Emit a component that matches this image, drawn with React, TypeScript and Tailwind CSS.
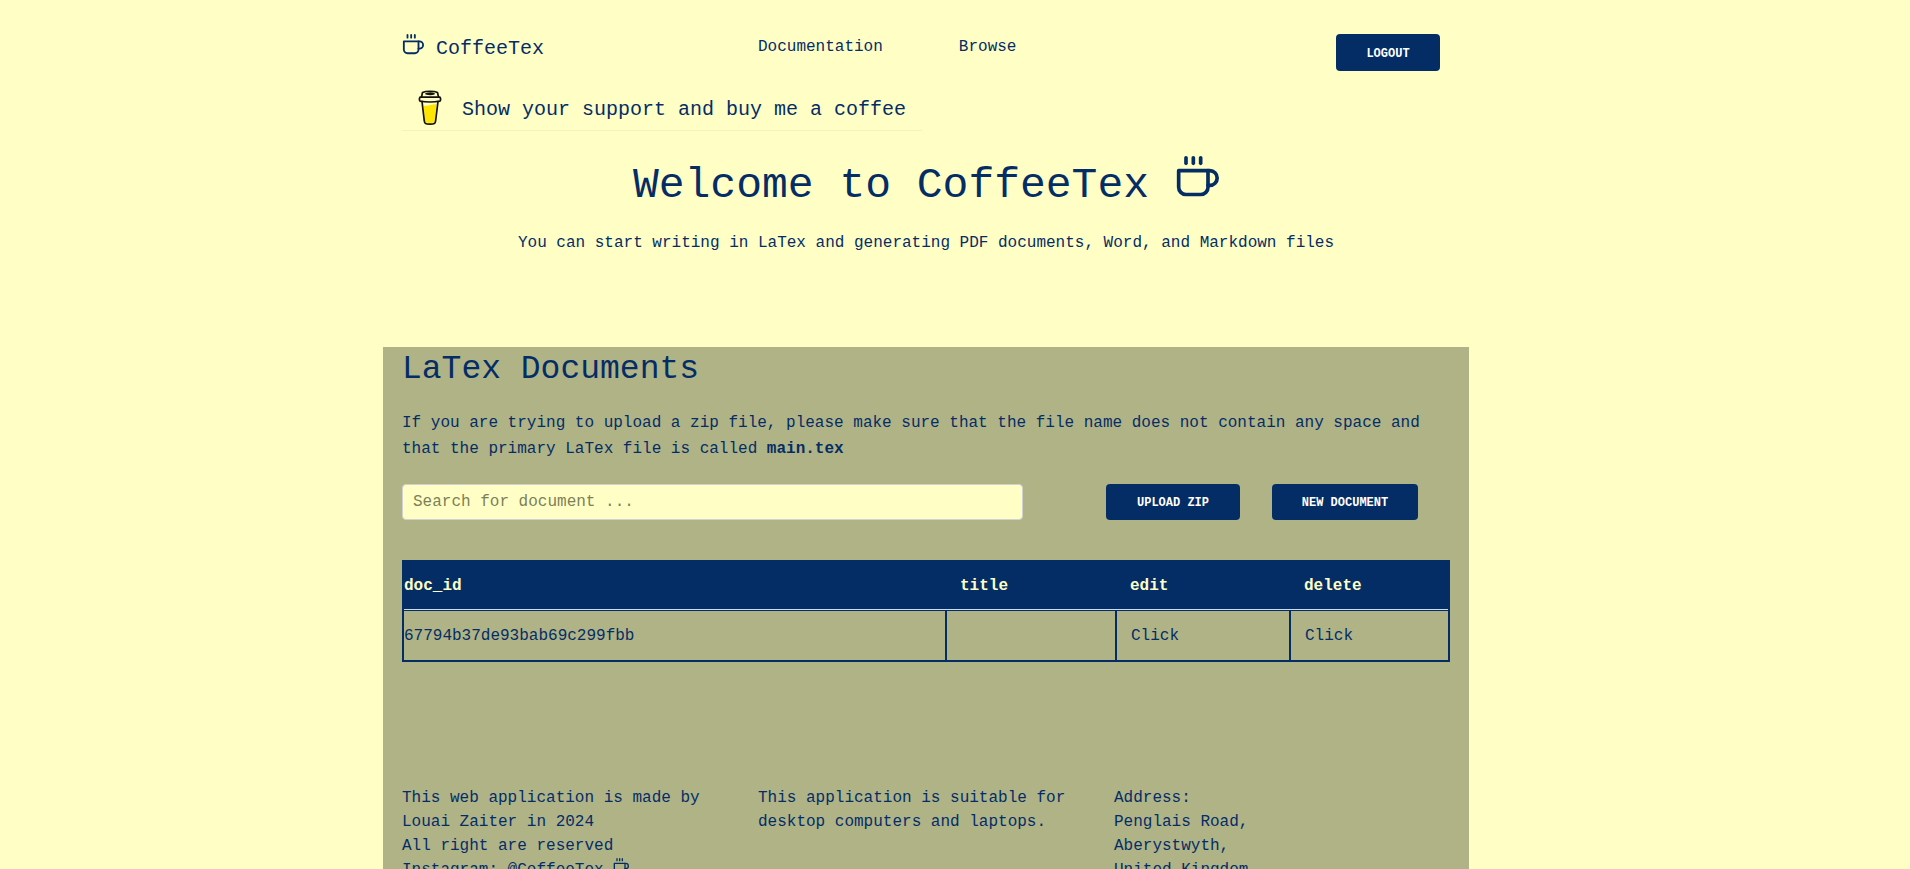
import React from "react";
import { FiCoffee } from "react-icons/fi";

function ToGoCup() {
  return (
    <svg viewBox="0 0 24 36" className="mb-1 h-9 w-6" aria-hidden="true">
      <path d="M5.500 15.500c4 .8 6-.8 13-1.600l-1.600 16.600c-.2 2-1 2.400-5 2.400s-4.700-.4-5-2.400z" fill="#ffe600" />
      <g fill="none" stroke="#14140a" strokeWidth="1.700" strokeLinecap="round" strokeLinejoin="round">
        <path d="M4 11.500l2.300 19.500c.3 2.600 1.200 3.200 5.700 3.200s5.300-.6 5.600-3.200L20 11.500" />
        <path d="M2 7.200h20c.8 1.300.8 2.600 0 3.900-5 1-15 1-20 0-.8-1.300-.8-2.600 0-3.900z" />
        <path d="M3.500 7l1-4.500C8 .8 16 .8 19.500 2.500l1 4.500" />
        <path d="M8 3.700c3-.8 6-.8 8 0-2 .9-5 .9-8 0z" />
      </g>
    </svg>
  );
}

const button =
  "flex cursor-pointer items-center justify-center rounded bg-[#042d66] pt-0.5 text-xs font-bold uppercase text-white hover:bg-[#0a3d85]";

const cell = "border-t border-l-2 border-[#042d66] px-3.5 py-0";

const documents = [{ id: "67794b37de93bab69c299fbb", title: "" }];

export default function App() {
  return (
    <div className="min-h-screen bg-[#ffffc5] pr-[58px] font-['Liberation_Mono',monospace] text-base text-[#042d66]">
      <div className="mx-auto max-w-[1086px]">
        <header className="px-[19px] pt-[34px]">
          <div className="grid grid-cols-[356px_1fr_auto] items-start pr-[10px]">
            <a href="#home" className="flex items-center gap-3 text-xl leading-[30px]">
              <FiCoffee className="mb-2 size-[22px]" />
              CoffeeTex
            </a>
            <nav className="flex gap-[76px] leading-[26px]">
              <a href="#documentation">Documentation</a>
              <a href="#browse">Browse</a>
            </nav>
            <button type="button" className={`${button} h-[37px] w-[104px]`}>
              Logout
            </button>
          </div>
          <a
            href="#support"
            className="mt-4 flex h-11 w-[520px] items-center gap-5 border-b border-[#f3f4ba] pt-0.5 pl-4 text-xl"
          >
            <ToGoCup />
            Show your support and buy me a coffee
          </a>
        </header>

        <section className="flex flex-col items-center pt-[25px] pb-[92px]">
          <h1 className="flex items-center gap-[26px] text-[43px] leading-[58px]">
            Welcome to CoffeeTex
            <FiCoffee className="mb-4 size-11" />
          </h1>
          <p className="mt-[15px] leading-6">
            You can start writing in LaTex and generating PDF documents, Word, and Markdown files
          </p>
        </section>

        <main className="bg-[#b0b386] px-[19px] pb-10">
          <h2 className="pt-0.5 text-[33px] leading-[42px]">LaTex Documents</h2>
          <p className="mt-[19px] leading-[26px]">
            If you are trying to upload a zip file, please make sure that the file name does not contain any space and
            that the primary LaTex file is called <strong>main.tex</strong>
          </p>

          <div className="mt-[22px] flex items-center">
            <input
              type="search"
              aria-label="Search for document"
              placeholder="Search for document ..."
              className="h-9 w-[621px] rounded border border-[#d1d1d1] bg-[#ffffc5] px-2.5 placeholder:text-[#7d7f58]"
            />
            <button type="button" className={`${button} ml-[83px] h-9 w-[134px]`}>
              Upload zip
            </button>
            <button type="button" className={`${button} ml-8 h-9 w-[146px]`}>
              New document
            </button>
          </div>

          <table className="mt-10 w-full table-fixed border-separate border-spacing-0 border-2 border-[#042d66] text-left">
            <colgroup>
              <col className="w-[541px]" />
              <col className="w-[170px]" />
              <col className="w-[174px]" />
              <col />
            </colgroup>
            <thead className="bg-[#042d66] text-[#ffffc5]">
              <tr className="h-12">
                <th className="border-b border-[#c9dcf0] p-0">doc_id</th>
                <th className="border-b border-[#c9dcf0] px-[15px] py-0">title</th>
                <th className="border-b border-[#c9dcf0] px-[15px] py-0">edit</th>
                <th className="border-b border-[#c9dcf0] px-[15px] py-0">delete</th>
              </tr>
            </thead>
            <tbody>
              {documents.map((doc) => (
                <tr key={doc.id} className="h-[50px]">
                  <td className="border-t border-[#042d66] p-0">{doc.id}</td>
                  <td className={cell}>{doc.title}</td>
                  <td className={cell}>
                    <a href="#edit">Click</a>
                  </td>
                  <td className={cell}>
                    <a href="#delete">Click</a>
                  </td>
                </tr>
              ))}
            </tbody>
          </table>

          <footer className="mt-[124px] grid grid-cols-[310px_310px_310px] gap-x-[46px] leading-6">
            <p>
              This web application is made by Louai Zaiter in 2024
              <br />
              All right are reserved
              <br />
              Instagram: @CoffeeTex <FiCoffee className="inline size-4 align-baseline" />
            </p>
            <p>This application is suitable for desktop computers and laptops.</p>
            <address className="not-italic">
              Address:
              <br />
              Penglais Road,
              <br />
              Aberystwyth,
              <br />
              United Kingdom
            </address>
          </footer>
        </main>
      </div>
    </div>
  );
}
